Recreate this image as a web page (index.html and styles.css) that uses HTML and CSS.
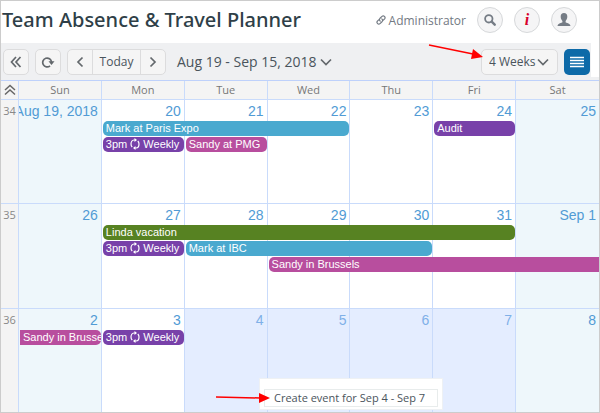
FILE: index.html
```html
<!DOCTYPE html>
<html lang="en">
<head>
<meta charset="utf-8">
<title>Team Absence &amp; Travel Planner</title>
<link rel="stylesheet" href="styles.css">
</head>
<body>
<svg class="defs" aria-hidden="true">
  <symbol id="repeat" viewBox="0 0 10 12">
    <path d="M5 2H4C2 2 1 4 1 6c0 1.300.4 2.200 1.200 3M5 10h1c2 0 3-2 3-4 0-1.300-.4-2.200-1.200-3" fill="none" stroke="currentColor" stroke-width="1.200"/>
    <path d="M4.500 0v4L7 2zM5.500 8v4L3 10z" fill="currentColor"/>
  </symbol>
</svg>
<div class="app">
  <header class="top">
    <h1>Team Absence &amp; Travel Planner</h1>
    <a class="user" href="#">
      <svg width="10" height="10" viewBox="0 0 10 10" fill="none" stroke="currentColor" stroke-width="1.200" stroke-linecap="round"><path d="M4.200 6.200C3 5 3.300 4 4 3.300L6 1.400c1.600-1.500 4 .7 2.600 2.400L7.300 5.200M5.800 3.800C7 5 6.700 6 6 6.700L4 8.600C2.400 10.100 0 7.900 1.400 6.200l1.300-1.400"/></svg>
      Administrator
    </a>
    <button class="round" aria-label="Search"><svg width="12" height="12" viewBox="0 0 12 12" fill="none" stroke="#757c85"><circle cx="4.800" cy="4.800" r="3.700" stroke-width="1.800"/><path d="M7.700 7.700l3 3" stroke-width="2.400" stroke-linecap="round"/></svg></button>
    <button class="round info" aria-label="Information">i</button>
    <button class="round" aria-label="Account"><svg width="14" height="14" viewBox="0 0 14 14" fill="#757c85"><path d="M7 0C4.800 0 3.700 1.400 3.700 3.500c0 2 .7 3.500 1.700 4.400v1.300C4.800 10 1 10 .5 13h13c-.5-3-4.300-3-4.900-3.800V7.900c1-.9 1.700-2.400 1.700-4.400C10.300 1.400 9.200 0 7 0z"/></svg></button>
  </header>

  <div class="toolbar">
    <button class="btn" aria-label="Collapse"><svg width="12" height="12" viewBox="0 0 12 12"><path d="M6 1L1.500 6 6 11M10.500 1L6 6l4.500 5"/></svg></button>
    <button class="btn" aria-label="Refresh"><svg width="14" height="12" viewBox="0 0 14 12"><path d="M9 9.800A4.400 4.400 0 1 1 10.500 6"/><path class="solid" d="M7.500 5.300h6L10.500 9z"/></svg></button>
    <div class="group">
      <button aria-label="Previous"><svg width="8" height="12" viewBox="0 0 8 12"><path d="M6.500 1.500L2 6l4.500 4.500"/></svg></button>
      <button class="today">Today</button>
      <button aria-label="Next"><svg width="8" height="12" viewBox="0 0 8 12"><path d="M1.500 1.500L6 6l-4.500 4.500"/></svg></button>
    </div>
    <button class="range">Aug 19 - Sep 15, 2018 <svg width="12" height="8" viewBox="0 0 12 8"><path d="M1 1.500l5 5 5-5"/></svg></button>
    <label class="view">
      <select aria-label="View"><option>4 Weeks</option></select>
      <svg width="12" height="8" viewBox="0 0 12 8"><path d="M1 1.500l5 5 5-5"/></svg>
    </label>
    <button class="menu" aria-label="Menu"><svg width="14" height="12" viewBox="0 0 14 12"><path d="M0 1.500h14M0 4.500h14M0 7.500h14M0 10.500h14"/></svg></button>
  </div>

  <main class="calendar">
    <div class="row head">
      <button class="gutter" aria-label="Scroll up"><svg width="12" height="12" viewBox="0 0 12 12"><path d="M1 6l5-4.500L11 6M1 10.500L6 6l5 4.500"/></svg></button>
      <div>Sun</div><div>Mon</div><div>Tue</div><div>Wed</div><div>Thu</div><div>Fri</div><div>Sat</div>
    </div>

    <section class="row week">
      <div class="gutter">34</div>
      <div class="day c1 off"><span>Aug 19, 2018</span></div>
      <div class="day c2"><span>20</span></div>
      <div class="day c3"><span>21</span></div>
      <div class="day c4"><span>22</span></div>
      <div class="day c5"><span>23</span></div>
      <div class="day c6"><span>24</span></div>
      <div class="day c7 off"><span>25</span></div>
      <a href="#" class="event blue c2 span3 l1">Mark at Paris Expo</a>
      <a href="#" class="event purple c6 l1">Audit</a>
      <a href="#" class="event purple c2 l2">3pm <svg class="repeat"><use href="#repeat"/></svg> Weekly</a>
      <a href="#" class="event pink c3 l2">Sandy at PMG</a>
    </section>

    <section class="row week">
      <div class="gutter">35</div>
      <div class="day c1 off"><span>26</span></div>
      <div class="day c2"><span>27</span></div>
      <div class="day c3"><span>28</span></div>
      <div class="day c4"><span>29</span></div>
      <div class="day c5"><span>30</span></div>
      <div class="day c6"><span>31</span></div>
      <div class="day c7 off"><span>Sep 1</span></div>
      <a href="#" class="event green c2 span5 l1">Linda vacation</a>
      <a href="#" class="event purple c2 l2">3pm <svg class="repeat"><use href="#repeat"/></svg> Weekly</a>
      <a href="#" class="event blue c3 span3 l2">Mark at IBC</a>
      <a href="#" class="event pink c4 span4 l3 onward">Sandy in Brussels</a>
    </section>

    <section class="row week">
      <div class="gutter">36</div>
      <div class="day c1 off"><span>2</span></div>
      <div class="day c2"><span>3</span></div>
      <div class="day c3 picked"><span>4</span></div>
      <div class="day c4 picked"><span>5</span></div>
      <div class="day c5 picked"><span>6</span></div>
      <div class="day c6 picked"><span>7</span></div>
      <div class="day c7 off"><span>8</span></div>
      <a href="#" class="event pink c1 l1 earlier">Sandy in Brussels</a>
      <a href="#" class="event purple c2 l1">3pm <svg class="repeat"><use href="#repeat"/></svg> Weekly</a>
    </section>
  </main>

  <div class="popup"><button>Create event for Sep 4 - Sep 7</button></div>
  <svg class="arrow to-view" width="56" height="18" viewBox="0 0 56 18"><path d="M1 2l44 9" stroke="red" stroke-width="1.500"/><path d="M45 6l10 8-12 2z" fill="red"/></svg>
  <svg class="arrow to-popup" width="56" height="12" viewBox="0 0 56 12"><path d="M1 5l44 1" stroke="red" stroke-width="1.500"/><path d="M44 1l11 5-11 5z" fill="red"/></svg>
</div>
</body>
</html>
```

FILE: styles.css
```css
* { box-sizing: border-box; }

body {
  margin: 0;
  font-family: "Open Sans", sans-serif;
  color: #4a545c;
  background: #fff;
}

button, select {
  margin: 0;
  padding: 0;
  border: 0;
  background: none;
  font: inherit;
  color: inherit;
}

a { color: inherit; text-decoration: none; }
svg { flex: none; }
.defs { position: absolute; width: 0; height: 0; }

.app {
  position: relative;
  display: flex;
  flex-direction: column;
  min-height: 100vh;
  border: 1px solid #ccc;
  overflow: hidden;
}

/* Title bar */
.top {
  display: flex;
  align-items: center;
  gap: 11px;
  height: 42px;
  padding: 0 22px 4px 1px;
}

h1 {
  flex: 1;
  margin: 0;
  font-family: "Noto Sans", "Open Sans", sans-serif;
  font-size: 20px;
  font-weight: 500;
  line-height: 26px;
  color: #2f3f48;
  white-space: nowrap;
}

.user {
  display: flex;
  align-items: center;
  gap: 3px;
  font-size: 12px;
  color: #737a83;
}

.round {
  display: grid;
  place-items: center;
  width: 26px;
  height: 26px;
  border: 1px solid #d6d8da;
  border-radius: 50%;
  background: #f5f5f6;
}

.info {
  font: italic bold 16px/16px "Liberation Serif", serif;
  color: #d8002c;
}

/* Toolbar */
.toolbar {
  position: relative;
  display: flex;
  align-items: center;
  gap: 6px;
  height: 37px;
  padding: 0 9px 0 2px;
  background: #eff0f2;
}

.toolbar::after {
  content: "";
  position: absolute;
  top: 0;
  right: 0;
  width: 8px;
  height: 34px;
  background: #fff;
}

.toolbar path {
  fill: none;
  stroke: #63686c;
  stroke-width: 1.7;
}

.toolbar .solid { fill: #63686c; stroke: none; }

.btn, .group, .view {
  height: 26px;
  border: 1px solid #dcdcdd;
  border-radius: 5px;
  background: #f5f5f5;
}

.btn {
  display: grid;
  place-items: center;
  width: 26px;
}

.group { display: flex; }

.group button {
  display: grid;
  place-items: center;
  width: 24px;
  font-size: 12px;
}

.group .today {
  width: 49px;
  border: solid #dcdcdd;
  border-width: 0 1px;
}

.range {
  display: flex;
  align-items: center;
  gap: 3px;
  margin: 0 auto 0 5px;
  font-size: 14px;
}

.view {
  position: relative;
  display: flex;
  align-items: center;
  width: 77px;
  padding-left: 7px;
  font-size: 12px;
}

.view select { flex: 1; appearance: none; }
.view svg { position: absolute; right: 8px; pointer-events: none; }

.menu {
  display: grid;
  place-items: center;
  width: 26px;
  height: 26px;
  border-radius: 5px;
  background: #0d6aa8;
}

.toolbar .menu path { stroke: #fff; stroke-width: 1.5; }

/* Calendar */
.calendar {
  flex: 1;
  display: flex;
  flex-direction: column;
}

.row {
  display: grid;
  grid-template-columns: 18px repeat(7, minmax(0, 1fr));
}

.head {
  height: 19px;
  border-top: 1px solid #bed1fb;
  background: #f4f4f4;
  font-size: 11px;
  line-height: 18px;
  text-align: center;
  color: #777;
}

.head > * { border-right: 1px solid #c9dbfb; }
.row > :nth-child(8) { border-right: 0; }

.gutter {
  display: grid;
  justify-items: center;
  background: #f4f4f4;
  border-right: 1px solid #c9dbfb;
}

.head .gutter { align-items: center; }
.head path { fill: none; stroke: #666; stroke-width: 1.5; }

.week {
  flex: 1;
  grid-template-rows: 21px repeat(3, 16px) 1fr;
  border-top: 1px solid #c9dbfb;
}

.week .gutter {
  grid-row: 1 / -1;
  padding-top: 3px;
  font-size: 11px;
  line-height: 16px;
  color: #888;
}

.day {
  grid-row: 1 / -1;
  display: flex;
  justify-content: flex-end;
  padding: 3px 3px 0 0;
  border-right: 1px solid #c9dbfb;
  overflow: hidden;
  font-family: "Liberation Sans", sans-serif;
  font-size: 14px;
  line-height: 17px;
  white-space: nowrap;
  color: #519bd5;
}

.off { background: #eef7fb; }
.picked { background: #e4edff; color: #7fb0e8; }

.event {
  height: 15px;
  margin: 0 1px;
  padding-left: 3px;
  border-radius: 5px;
  font-family: "Liberation Sans", sans-serif;
  font-size: 11px;
  line-height: 15px;
  color: #fff;
  white-space: nowrap;
  overflow: hidden;
}

.repeat { width: 10px; height: 12px; vertical-align: -2px; }

.blue { background: #4aa9cf; }
.purple { background: #7841a9; }
.pink { background: #b84e9e; }
.green { background: #578222; }
.onward { margin-right: 0; border-radius: 5px 0 0 5px; }
.earlier { border-radius: 0 5px 5px 0; }

.l1 { grid-row: 2; }
.l2 { grid-row: 3; }
.l3 { grid-row: 4; }

.c1 { grid-column: 2; }
.c2 { grid-column: 3; }
.c3 { grid-column: 4; }
.c4 { grid-column: 5; }
.c5 { grid-column: 6; }
.c6 { grid-column: 7; }
.c7 { grid-column: 8; }
.c2.span3 { grid-column: 3 / span 3; }
.c2.span5 { grid-column: 3 / span 5; }
.c3.span3 { grid-column: 4 / span 3; }
.c4.span4 { grid-column: 5 / span 4; }

/* Overlays */
.popup {
  position: absolute;
  left: 258px;
  bottom: 2px;
  padding: 6px 4px 2px;
  border: 1px solid #eef1f4;
  background: #fff;
}

.popup button {
  width: 174px;
  height: 18px;
  padding-left: 9px;
  border: 1px solid #e8ecec;
  font-size: 11px;
  line-height: 16px;
  text-align: left;
}

.arrow { position: absolute; }
.to-view { top: 42px; right: 115px; }
.to-popup { left: 214px; bottom: 8px; }
```
